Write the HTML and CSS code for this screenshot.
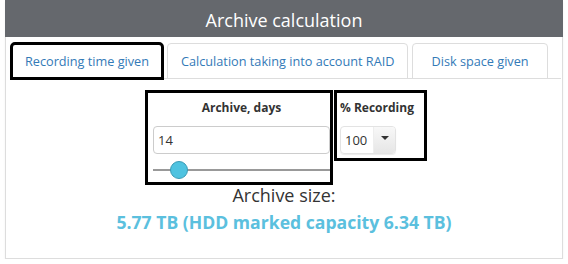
FILE: index.html
```html
<!DOCTYPE html>
<html lang="en">
  <head>
    <meta charset="UTF-8" />
    <title>Archive calculation</title>
    <link rel="stylesheet" href="styles.css">
  </head>
  <body>
    <div class="panel">
      <div class="panel-heading">Archive calculation</div>
      <div class="panel-body">
        <ul class="nav-tabs">
          <li class="tab active">Recording time given</li>
          <li class="tab">Calculation taking into account RAID</li>
          <li class="tab">Disk space given</li>
        </ul>

        <div class="form-row">
          <div class="field field-days">
            <label>Archive, days</label>
            <input type="text" class="form-control" value="14">
            <input type="range" class="slider" min="1" max="120" value="14">
          </div>
          <div class="field field-percent">
            <label>% Recording</label>
            <div class="select">
              <span class="select-value">100</span>
              <span class="select-btn"><span class="caret"></span></span>
            </div>
          </div>
        </div>

        <div class="result">
          <div class="result-label">Archive size:</div>
          <div class="result-value">5.77 TB (HDD marked capacity 6.34 TB)</div>
        </div>
      </div>
    </div>
  </body>
</html>
```
FILE: styles.css
```css
* {
  margin: 0;
  padding: 0;
  box-sizing: border-box;
}
body {
  font-family: "Open Sans", sans-serif;
  background: white;
  color: #333;
}
.panel {
  margin: 0 5px;
  height: 259px;
  border: 1px solid #ddd;
  border-top: none;
  box-shadow: 0 2px 2px rgba(0, 0, 0, 0.06);
}
.panel-heading {
  margin: 0 -1px;
  height: 37px;
  padding-top: 3px;
  line-height: 34px;
  background: #65686d;
  color: white;
  font-size: 18px;
  text-align: center;
}

/* tabs */
.nav-tabs {
  display: flex;
  list-style: none;
  margin: 6px 1px 0 4px;
  border-bottom: 1px solid #ddd;
}
.tab {
  margin: 0 4px -1px 0;
  padding: 9px 13px;
  border: 1px solid #ddd;
  border-radius: 4px 4px 0 0;
  color: #337ab7;
  font-size: 12.7px;
  line-height: 16px;
}
.tab:first-child {
  margin-left: 1px;
}
.tab:last-child {
  padding: 9px 18px;
}
.tab.active {
  background: white;
  border-bottom-color: white;
  outline: 3px solid #000;
  outline-offset: -2px;
}

/* form */
.form-row {
  display: flex;
  justify-content: center;
  align-items: flex-start;
  margin-top: 11px;
  padding-left: 4px;
}
.field {
  border: 3px solid #000;
}
.field label {
  display: block;
  font-size: 12px;
  font-weight: bold;
  line-height: 17px;
  margin-bottom: 10px;
}
.field-days {
  width: 188px;
  padding: 6px 0 3px 5px;
}
.field-days label {
  text-align: center;
}
.field-percent {
  width: 93px;
  margin-left: 1px;
  padding: 6px 0 4px 3px;
}
.form-control {
  display: block;
  width: 177px;
  height: 28px;
  padding: 0 4px;
  border: 1px solid #ccc;
  border-radius: 4px;
  font-family: inherit;
  font-size: 13px;
  color: #333;
}
.slider {
  -webkit-appearance: none;
  appearance: none;
  display: block;
  width: 177px;
  height: 18px;
  margin-top: 7px;
  background: transparent;
}
.slider::-webkit-slider-runnable-track {
  height: 2px;
  background: #999;
}
.slider::-webkit-slider-thumb {
  -webkit-appearance: none;
  width: 18px;
  height: 18px;
  margin-top: -8px;
  border-radius: 50%;
  border: 1px solid #3a9bb5;
  background: #4fc3e0;
}
.select {
  display: flex;
  width: 56px;
  height: 28px;
  border: 1px solid #e3e3e3;
  border-radius: 4px;
  box-shadow: 0 1px 1px rgba(0, 0, 0, 0.08);
  overflow: hidden;
}
.select-value {
  flex: 1;
  padding-left: 4px;
  font-size: 13px;
  line-height: 26px;
}
.select-btn {
  display: flex;
  align-items: center;
  justify-content: center;
  width: 22px;
  background: linear-gradient(#f8f8f8, #e6e6e6);
  border-left: 1px solid #eee;
}
.caret {
  width: 0;
  height: 0;
  margin-top: -5px;
  border-left: 4px solid transparent;
  border-right: 4px solid transparent;
  border-top: 4px solid #333;
}

/* result */
.result {
  text-align: center;
}
.result-label {
  font-size: 18px;
  line-height: 20px;
}
.result-value {
  margin-top: 5px;
  color: #5bc0de;
  font-size: 17.6px;
  font-weight: bold;
  line-height: 24px;
}
```
